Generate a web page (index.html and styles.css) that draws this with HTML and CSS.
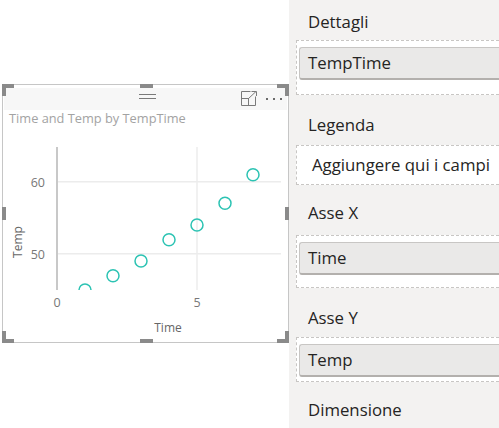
FILE: index.html
```html
<!DOCTYPE html>
<html>
<head>
<meta charset="utf-8">
<link rel="stylesheet" href="styles.css">
</head>
<body>
<div class="page">
  <div class="canvas">
    <div class="visual">
      <div class="vheader">
        <div class="grip"></div>
        <div class="vtools">
          <svg class="focus" width="17" height="15" viewBox="0 0 17 15">
            <path d="M9.5 0.5 H0.5 V14.5 H14.5 V5.5" fill="none" stroke="#7a7a7a" stroke-width="1"/>
            <path d="M0.5 7.5 H7.5 V14.5" fill="none" stroke="#7a7a7a" stroke-width="1"/>
            <path d="M7 8 L15 0.5 M10.5 0.5 H15.5 V5" fill="none" stroke="#7a7a7a" stroke-width="1"/>
          </svg>
          <svg class="more" width="17" height="15" viewBox="0 0 17 15">
            <rect x="0" y="7" width="2" height="2" fill="#6a6a6a"/>
            <rect x="7" y="7" width="2" height="2" fill="#6a6a6a"/>
            <rect x="14" y="7" width="2" height="2" fill="#6a6a6a"/>
          </svg>
        </div>
      </div>
      <div class="vtitle">Time and Temp by TempTime</div>
      <svg class="plot" width="283" height="214" viewBox="0 0 283 214">
        <defs>
          <clipPath id="pc"><rect x="54" y="0" width="229" height="164"/></clipPath>
        </defs>
        <line x1="54" y1="55.7" x2="278" y2="55.7" class="grid"/>
        <line x1="54" y1="127.7" x2="278" y2="127.7" class="grid"/>
        <line x1="194" y1="21" x2="194" y2="164" class="grid"/>
        <line x1="54" y1="21" x2="54" y2="164" class="axis"/>
        <text x="42" y="60.5" class="tick" text-anchor="end">60</text>
        <text x="42" y="132.5" class="tick" text-anchor="end">50</text>
        <text x="54" y="180.5" class="tick" text-anchor="middle">0</text>
        <text x="194" y="180.5" class="tick" text-anchor="middle">5</text>
        <text x="165" y="206" class="atitle" text-anchor="middle">Time</text>
        <text x="0" y="0" class="atitle" text-anchor="middle" transform="translate(19 116) rotate(-90)">Temp</text>
        <g clip-path="url(#pc)" class="pts">
          <circle cx="82" cy="164" r="6"/>
          <circle cx="110" cy="149.7" r="6"/>
          <circle cx="138" cy="135" r="6"/>
          <circle cx="166" cy="113.7" r="6"/>
          <circle cx="194" cy="99" r="6"/>
          <circle cx="222" cy="77.3" r="6"/>
          <circle cx="250" cy="48.7" r="6"/>
        </g>
      </svg>
      <span class="h tl"></span><span class="h tr"></span><span class="h bl"></span><span class="h br"></span>
      <span class="m mt"></span><span class="m mb"></span><span class="m ml"></span><span class="m mr"></span>
    </div>
  </div>
  <div class="panel">
    <div class="label l1">Dettagli</div>
    <div class="well w1"><div class="pill">TempTime</div></div>
    <div class="label l2">Legenda</div>
    <div class="well w2"><div class="hint">Aggiungere qui i campi</div></div>
    <div class="label l3">Asse X</div>
    <div class="well w3"><div class="pill">Time</div></div>
    <div class="label l4">Asse Y</div>
    <div class="well w4"><div class="pill">Temp</div></div>
    <div class="label l5">Dimensione</div>
  </div>
</div>
</body>
</html>
```

FILE: styles.css
```css
html, body {
  margin: 0;
  padding: 0;
  background: #ffffff;
}
body {
  width: 499px;
  height: 428px;
  overflow: hidden;
  font-family: "Open Sans", "Noto Sans", sans-serif;
}
.page {
  display: flex;
  width: 499px;
  height: 428px;
}
.canvas {
  width: 289px;
  flex: none;
  padding-top: 84px;
  padding-left: 2px;
  box-sizing: border-box;
}
.visual {
  position: relative;
  width: 287px;
  height: 259px;
  box-sizing: border-box;
  border: 1px solid #c6c6c6;
  background: #fff;
}
.vheader {
  margin: 3px 1px 0 1px;
  height: 22px;
  background: #f7f7f7;
  position: relative;
  display: flex;
  justify-content: flex-end;
  align-items: flex-start;
}
.grip {
  position: absolute;
  left: 135px;
  top: 6px;
  width: 17px;
  height: 3px;
  border-top: 1px solid #7a7a7a;
  border-bottom: 1px solid #7a7a7a;
}
.vtools {
  display: flex;
  align-items: flex-start;
  gap: 8px;
  padding-top: 3px;
  padding-right: 4px;
}
.focus, .more { display: block; }
.vtitle {
  font-size: 12.8px;
  color: #a3a3a3;
  padding-left: 6px;
  height: 16px;
  line-height: 16px;
  white-space: nowrap;
}
.plot { display: block; }
.grid { stroke: #ececec; stroke-width: 1.5; }
.axis { stroke: #c8c8c8; stroke-width: 2; }
.tick { font-size: 12.5px; fill: #777; font-family: "Open Sans", sans-serif; }
.atitle { font-size: 12px; fill: #666; font-family: "Open Sans", sans-serif; }
.pts circle { fill: none; stroke: #2cc3b3; stroke-width: 1.5; }
.h, .m {
  position: absolute;
  background: #8a8a8a;
}
.h { background: none; width: 8px; height: 8px; }
.tl { left: -1px; top: -1px; border-left: 4px solid #8a8a8a; border-top: 4px solid #8a8a8a; }
.tr { right: -1px; top: -1px; border-right: 4px solid #8a8a8a; border-top: 4px solid #8a8a8a; }
.bl { left: -1px; bottom: -1px; border-left: 4px solid #8a8a8a; border-bottom: 4px solid #8a8a8a; }
.br { right: -1px; bottom: -1px; border-right: 4px solid #8a8a8a; border-bottom: 4px solid #8a8a8a; }
.mt { left: 137px; top: -1px; width: 13px; height: 4px; }
.mb { left: 137px; bottom: -1px; width: 13px; height: 4px; }
.ml { left: -1px; top: 122px; width: 4px; height: 13px; }
.mr { right: -1px; top: 122px; width: 4px; height: 13px; }

.panel {
  flex: 1;
  min-width: 0;
  background: #f3f2f1;
  color: #252423;
  font-size: 16.8px;
  white-space: nowrap;
}
.label {
  padding-left: 19px;
  height: 20px;
  line-height: 20px;
}
.l1 { margin-top: 12px; }
.l2 { margin-top: 20px; }
.l3 { margin-top: 18px; }
.l4 { margin-top: 20px; }
.l5 { margin-top: 18px; }
.well {
  margin-left: 7px;
  border: 1px dashed #c8c6c4;
  border-right: none;
  background: #fff;
  box-sizing: border-box;
  padding: 6px 0 0 2px;
}
.w1 { margin-top: 8px; height: 55px; }
.w2 { margin-top: 10px; height: 40px; padding: 0; }
.w3 { margin-top: 12px; height: 53px; }
.w4 { margin-top: 9px; height: 45px; }
.pill {
  height: 33px;
  box-sizing: border-box;
  background: #eae9e8;
  border: 1px solid #c8c6c4;
  border-bottom: 2px solid #b3b0ad;
  border-right: none;
  border-radius: 3px 0 0 3px;
  padding-left: 8px;
  line-height: 30px;
}
.hint {
  padding-left: 15px;
  line-height: 38px;
}
```
